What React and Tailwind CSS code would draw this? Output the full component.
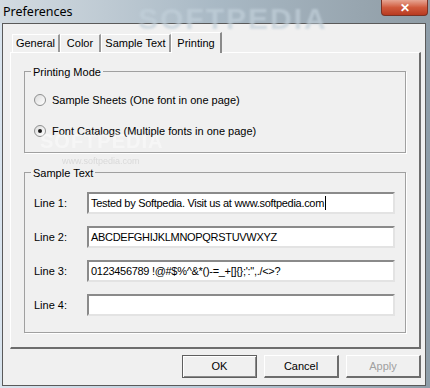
import React from 'react';

const font = { fontFamily: '"Liberation Sans", Arial, sans-serif' };

const Radio = ({ checked }) => (
  <span className="w-[12px] h-[12px] rounded-full border border-[#8e8f8f] bg-gradient-to-br from-[#dcdcdc] to-[#ffffff] flex items-center justify-center shrink-0">
    {checked && <span className="w-[4px] h-[4px] rounded-full bg-[#1a1a1a]" />}
  </span>
);

const Field = ({ label, value, caret }) => (
  <div className="flex items-center h-[22px]">
    <span className="w-[53px] text-[11px] text-black">{label}</span>
    <div className="flex-1 h-[22px] bg-white border-t-2 border-l-2 border-t-[#8a8a8a] border-l-[#8a8a8a] border-b-2 border-r-2 border-b-[#e3e3e3] border-r-[#e3e3e3] flex items-center pl-[2px] text-[11px] tracking-[-0.3px] text-black whitespace-nowrap overflow-hidden">
      {value}
      {caret && <span className="w-px h-[14px] bg-black ml-px" />}
    </div>
  </div>
);

const Tab = ({ children, w, active }) =>
  active ? (
    <div className={`${w} h-[21px] -mb-px relative z-10 bg-[#f0f0f0] border-t border-l border-white border-r-2 border-r-[#8a8a8a] flex items-start justify-center pt-[2px] text-[11px] text-black`}>
      {children}
    </div>
  ) : (
    <div className={`${w} h-[18px] mt-[2px] bg-[#f0f0f0] border-t border-l border-white border-r-2 border-r-[#9a9a9a] flex items-center justify-center text-[11px] text-black`}>
      {children}
    </div>
  );

const Button = ({ children, primary, disabled }) => (
  <div
    className={`w-[75px] h-[23px] flex items-center justify-center text-[11px] bg-[#f0f0f0] ${
      primary
        ? 'border border-[#5f5f5f] shadow-[inset_1px_1px_0_#fff,inset_-1px_-1px_0_#8a8a8a]'
        : 'border-t border-l border-white border-b-2 border-r-2 border-b-[#6d6d6d] border-r-[#6d6d6d]'
    } ${disabled ? 'text-[#a0a0a0]' : 'text-black'}`}
  >
    {children}
  </div>
);

export default function App() {
  return (
    <div
      className="w-[430px] h-[388px] relative overflow-hidden bg-gradient-to-r from-[#d9e4ee] via-[#b7c8d6] to-[#8e9da8]"
      style={font}
    >
      {/* Title bar */}
      <div className="h-[23px] flex items-start justify-between bg-gradient-to-r from-[#d3dbe1] via-[#a9b9c5] to-[#8f9ca5] relative">
        <span className="pl-[3px] pt-[3px] text-[12.5px] text-black" style={{ fontFamily: '"Noto Sans", "Open Sans", sans-serif' }}>
          Preferences
        </span>
        <span className="absolute left-[138px] top-[-4px] text-[30px] font-bold tracking-[2px] text-[#c2d0da] opacity-70 blur-[1px]">
          SOFTPEDIA
        </span>
        <div className="w-[47px] h-[16px] mr-[2px] rounded-b-[4px] border border-t-0 border-[#7a3224] bg-gradient-to-b from-[#e6a593] via-[#d05a3c] to-[#b83a20] flex items-center justify-center text-white text-[12px] font-bold">
          ✕
        </div>
      </div>

      {/* Client area */}
      <div className="ml-[2px] w-[424px] h-[363px] border border-[#5a5a5a] bg-[#f0f0f0] flex flex-col">
        {/* Tabs */}
        <div className="flex items-start pl-[9px] pt-[8px] h-[28px]">
          <Tab w="w-[48px]">General</Tab>
          <Tab w="w-[41px]">Color</Tab>
          <Tab w="w-[70px]">Sample Text</Tab>
          <Tab w="w-[51px]" active>Printing</Tab>
        </div>

        {/* Panel */}
        <div className="ml-[7px] w-[411px] h-[297px] border-t border-l border-white border-r-2 border-b-2 border-r-[#6d6d6d] border-b-[#6d6d6d] pl-[13px] pr-[13px] pt-[18px]">
          {/* Printing Mode */}
          <div className="relative h-[82px] border border-[#a0a0a0] shadow-[1px_1px_0_#fff] pl-[9px] pt-[20px] flex flex-col gap-[15px]">
            <span className="absolute -top-[8px] left-[6px] bg-[#f0f0f0] px-[2px] text-[11px] text-black">Printing Mode</span>
            <label className="flex items-center gap-[6px] h-[16px] text-[11px] text-black">
              <Radio />
              Sample Sheets (One font in one page)
            </label>
            <label className="flex items-center gap-[6px] h-[16px] text-[11px] text-black">
              <Radio checked />
              Font Catalogs (Multiple fonts in one page)
            </label>
          </div>

          {/* Sample Text */}
          <div className="relative mt-[19px] h-[161px] border border-[#a0a0a0] shadow-[1px_1px_0_#fff] pl-[9px] pr-[10px] pt-[19px] flex flex-col gap-[12px]">
            <span className="absolute -top-[8px] left-[6px] bg-[#f0f0f0] px-[2px] text-[11px] text-black">Sample Text</span>
            <Field label="Line 1:" value="Tested by Softpedia. Visit us at www.softpedia.com" caret />
            <Field label="Line 2:" value="ABCDEFGHIJKLMNOPQRSTUVWXYZ" />
            <Field label="Line 3:" value={'0123456789 !@#$%^&*()-=_+[]{};\':",./<>?'} />
            <Field label="Line 4:" value="" />
          </div>
        </div>

        {/* Buttons */}
        <div className="flex justify-end gap-[7px] pr-[4px] pt-[6px]">
          <Button primary>OK</Button>
          <Button>Cancel</Button>
          <Button disabled>Apply</Button>
        </div>
      </div>

      {/* Watermark */}
      <span className="absolute left-[40px] top-[131px] text-[20px] leading-[20px] font-bold tracking-[1px] text-white opacity-40 pointer-events-none">
        SOFTPEDIA
      </span>
      <span className="absolute left-[62px] top-[156px] text-[9px] leading-[10px] text-[#d0d0d0] opacity-70 pointer-events-none">
        www.softpedia.com
      </span>
    </div>
  );
}
